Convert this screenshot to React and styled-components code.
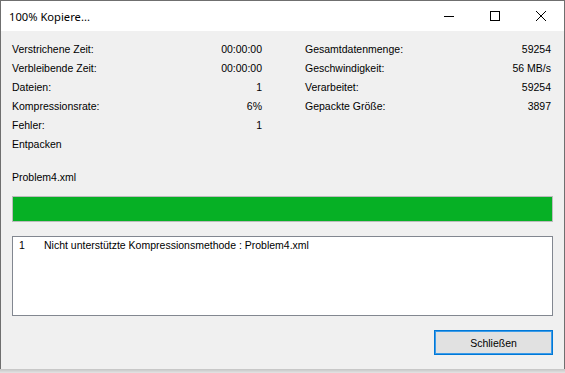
import styled, { createGlobalStyle } from "styled-components";

const Global = createGlobalStyle`
  html, body {
    margin: 0;
    padding: 0;
    background: linear-gradient(#c4c4c4, #e4e4e4) bottom / 100% 4px no-repeat, #f0f0f0;
    height: 373px;
    overflow: hidden;
  }
`

const Window = styled.div`
  width: 565px;
  height: 369px;
  box-sizing: border-box;
  border: 1px solid #6f6f6f;
  border-bottom: none;
  display: flex;
  flex-direction: column;
  background: #f0f0f0;
  font-family: "Liberation Sans", Arial, sans-serif;
  font-size: 10.5px;
  color: #000;
`

const TitleBar = styled.div`
  height: 30px;
  flex-shrink: 0;
  background: #fff;
  display: flex;
  align-items: center;
`

const Title = styled.div`
  flex: 1;
  padding-left: 8px;
  font-family: "Noto Sans", "Open Sans", sans-serif;
  font-size: 11.2px;
  color: #000;
`

const CaptionButton = styled.div`
  width: 46px;
  height: 30px;
  display: flex;
  align-items: center;
  justify-content: center;
  svg { display: block; }
`

const Body = styled.div`
  flex: 1;
  display: flex;
  flex-direction: column;
  padding: 9px 11px 0 11px;
`

const Stats = styled.div`
  display: grid;
  grid-template-columns: 250px 246px;
  column-gap: 43px;
`

const Column = styled.div`
  display: flex;
  flex-direction: column;
`

const Row = styled.div`
  display: flex;
  justify-content: space-between;
  height: 19px;
  line-height: 19px;
`

const FileName = styled.div`
  margin-top: 14px;
  height: 19px;
  line-height: 19px;
`

const Progress = styled.div`
  margin-top: 9px;
  height: 26px;
  box-sizing: border-box;
  border: 1px solid #bcbcbc;
  background: #e6e6e6;
`

const ProgressFill = styled.div`
  height: 100%;
  background: #06b025;
`

const LogList = styled.div`
  margin-top: 14px;
  height: 80px;
  box-sizing: border-box;
  border: 1px solid #828790;
  background: #fff;
  padding: 1px 0 0 6px;
`

const LogLine = styled.div`
  display: flex;
  line-height: 15px;
`

const LogNo = styled.span`
  width: 25px;
`

const Footer = styled.div`
  display: flex;
  justify-content: flex-end;
  margin-top: 14px;
`

const Button = styled.button`
  width: 119px;
  height: 25px;
  box-sizing: border-box;
  border: 1px solid #0078d7;
  box-shadow: inset 0 0 0 1px #3c9be8;
  background: #e1e1e1;
  font-family: "Liberation Sans", Arial, sans-serif;
  font-size: 10.5px;
  color: #000;
  padding: 0;
`

const left = [
  ["Verstrichene Zeit:", "00:00:00"],
  ["Verbleibende Zeit:", "00:00:00"],
  ["Dateien:", "1"],
  ["Kompressionsrate:", "6%"],
  ["Fehler:", "1"],
  ["Entpacken", ""],
];

const right = [
  ["Gesamtdatenmenge:", "59254"],
  ["Geschwindigkeit:", "56 MB/s"],
  ["Verarbeitet:", "59254"],
  ["Gepackte Größe:", "3897"],
];

function App() {
  return (
    <>
      <Global />
      <Window>
        <TitleBar>
          <Title>100% Kopiere...</Title>
          <CaptionButton>
            <svg width="10" height="10" viewBox="0 0 10 10">
              <path d="M0 5.5H10" stroke="#000" strokeWidth="1" />
            </svg>
          </CaptionButton>
          <CaptionButton>
            <svg width="10" height="10" viewBox="0 0 10 10">
              <rect x="0.5" y="0.5" width="9" height="9" fill="none" stroke="#000" strokeWidth="1" />
            </svg>
          </CaptionButton>
          <CaptionButton>
            <svg width="10" height="10" viewBox="0 0 10 10">
              <path d="M0 0L10 10M10 0L0 10" stroke="#000" strokeWidth="1" />
            </svg>
          </CaptionButton>
        </TitleBar>
        <Body>
          <Stats>
            <Column>
              {left.map(([k, v]) => (
                <Row key={k}><span>{k}</span><span>{v}</span></Row>
              ))}
            </Column>
            <Column>
              {right.map(([k, v]) => (
                <Row key={k}><span>{k}</span><span>{v}</span></Row>
              ))}
            </Column>
          </Stats>
          <FileName>Problem4.xml</FileName>
          <Progress>
            <ProgressFill style={{ width: "100%" }} />
          </Progress>
          <LogList>
            <LogLine>
              <LogNo>1</LogNo>
              <span>Nicht unterstützte Kompressionsmethode : Problem4.xml</span>
            </LogLine>
          </LogList>
          <Footer>
            <Button>Schließen</Button>
          </Footer>
        </Body>
      </Window>
    </>
  );
}

export default App;
